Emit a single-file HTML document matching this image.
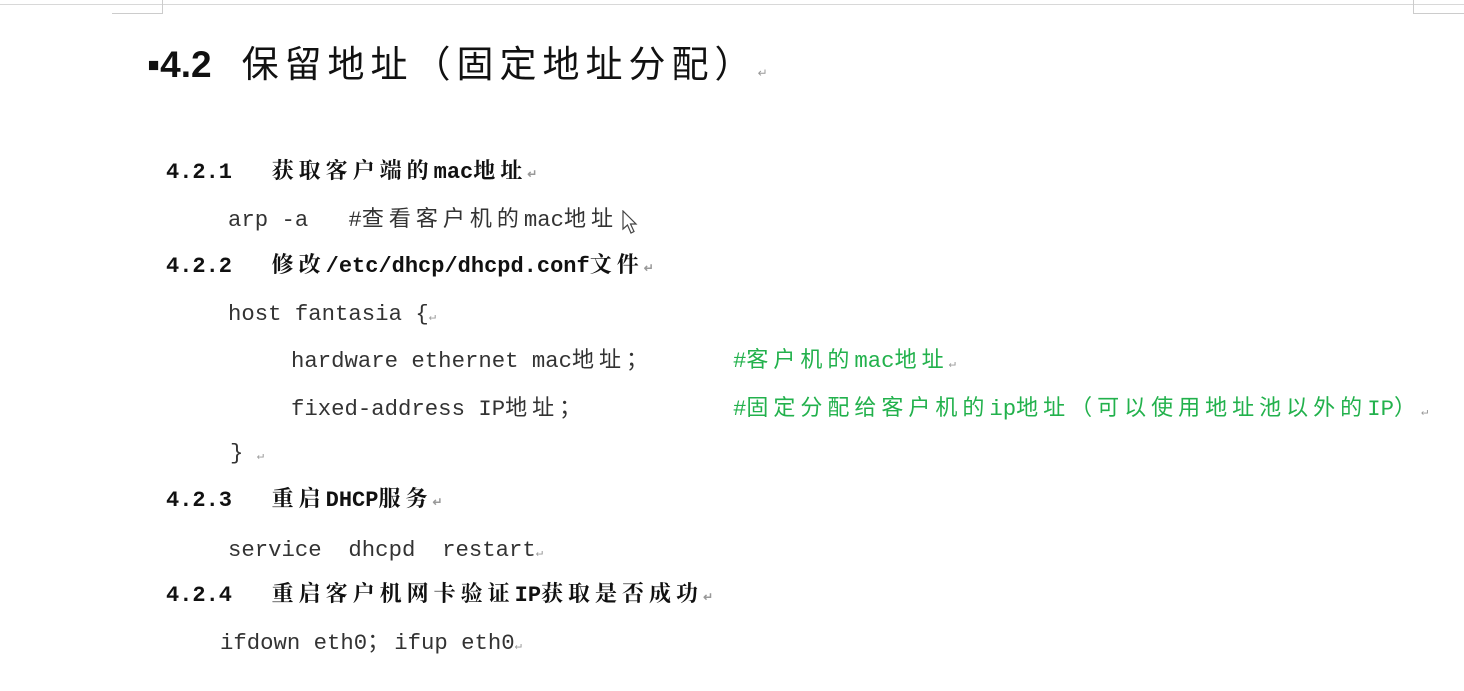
<!DOCTYPE html>
<html><head><meta charset="utf-8"><style>
body{margin:0;width:1464px;height:691px;background:#fff;position:relative;overflow:hidden;font-family:"Liberation Mono","Noto Sans CJK SC",monospace;color:#222}
.a{position:absolute;white-space:pre;line-height:1}
.h{font-family:"Liberation Mono","Noto Serif CJK SC",serif;font-weight:bold;font-size:22px;color:#111}
.c{font-size:22.3px;color:#333}
.g{color:#22b14c}
.k{letter-spacing:5px;font-size:22px}
.r{font-size:12px;color:#999;letter-spacing:0}
</style></head><body>
<div style="position:absolute;left:0;top:4px;width:1464px;height:1px;background:#d8d8d8"></div>
<div style="position:absolute;left:112px;top:13px;width:51px;height:1px;background:#ccc"></div>
<div style="position:absolute;left:162px;top:0;width:1px;height:14px;background:#ccc"></div>
<div style="position:absolute;left:1413px;top:0;width:1px;height:14px;background:#ccc"></div>
<div style="position:absolute;left:1413px;top:13px;width:51px;height:1px;background:#ccc"></div>
<div class="a" style="left:147px;top:46px;font-family:'Liberation Sans','Noto Sans CJK SC',sans-serif;font-size:37px;color:#111"><b>▪4.2</b><span style="letter-spacing:6px;margin-left:30px">保留地址（固定地址分配）</span><span class="r">↵</span></div>
<div class="a h" style="left:166px;top:162px">4.2.1   <span class="k">获取客户端的</span>mac<span class="k">地址</span><span class="r">↵</span></div>
<div class="a c" style="left:228px;top:209px">arp -a   #<span class="k">查看客户机的</span>mac<span class="k">地址</span></div>
<div class="a h" style="left:166px;top:256px">4.2.2   <span class="k">修改</span>/etc/dhcp/dhcpd.conf<span class="k">文件</span><span class="r">↵</span></div>
<div class="a c" style="left:228px;top:303px">host fantasia {<span class="r">↵</span></div>
<div class="a c" style="left:291px;top:350px">hardware ethernet mac<span class="k">地址；</span></div>
<div class="a c g" style="left:733px;top:350px">#<span class="k">客户机的</span>mac<span class="k">地址</span><span class="r">↵</span></div>
<div class="a c" style="left:291px;top:398px">fixed-address IP<span class="k">地址；</span></div>
<div class="a c g" style="left:733px;top:398px">#<span class="k">固定分配给客户机的</span>ip<span class="k">地址（可以使用地址池以外的</span>IP<span class="k">）</span><span class="r">↵</span></div>
<div class="a c" style="left:230px;top:442px">} <span class="r">↵</span></div>
<div class="a h" style="left:166px;top:490px">4.2.3   <span class="k">重启</span>DHCP<span class="k">服务</span><span class="r">↵</span></div>
<div class="a c" style="left:228px;top:539px">service  dhcpd  restart<span class="r">↵</span></div>
<div class="a h" style="left:166px;top:585px">4.2.4   <span class="k">重启客户机网卡验证</span>IP<span class="k">获取是否成功</span><span class="r">↵</span></div>
<div class="a c" style="left:220px;top:632px">ifdown eth0<span class="k">；</span>ifup eth0<span class="r">↵</span></div>
<svg style="position:absolute;left:622px;top:210px" width="18" height="26" viewBox="0 0 18 26"><path d="M1 1 L1 19 L5.5 15 L9 23 L12 21.5 L8.5 14 L14 14 Z" fill="#fff" stroke="#444" stroke-width="1.2"/></svg>
</body></html>
